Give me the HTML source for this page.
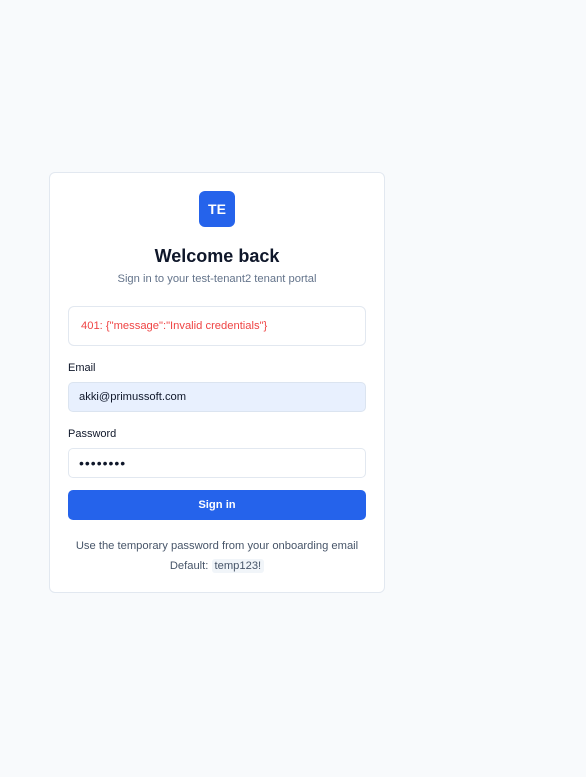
<!DOCTYPE html>
<html><head><meta charset="utf-8"><style>
*{box-sizing:border-box;margin:0;padding:0}
body{width:586px;height:777px;background:#f8fafc;font-family:"Liberation Sans",sans-serif;position:relative;overflow:hidden}
.card{position:absolute;left:49px;top:172px;width:336px;height:421px;background:#fff;border:1px solid #e2e8f0;border-radius:6px}
.logo{position:absolute;left:149px;top:18px;width:36px;height:36px;background:#2563eb;border-radius:6px;color:#fff;font-weight:bold;font-size:14px;text-align:center;line-height:36px}
h1{position:absolute;left:0;right:0;top:73px;text-align:center;font-size:18px;font-weight:bold;color:#0f172a}
.sub{position:absolute;left:0;right:0;top:100px;text-align:center;font-size:11.2px;color:#64748b}
.err{position:absolute;left:18px;top:133px;width:298px;height:40px;border:1px solid #e2e8f0;border-radius:6px;color:#ef4444;font-size:11.2px;line-height:38px;padding-left:12px}
.lbl{position:absolute;left:18px;font-size:11px;color:#0f172a}
.inp{position:absolute;left:18px;width:298px;height:30px;border:1px solid #e2e8f0;border-radius:5px;font-size:11.2px;line-height:28px;padding-left:10px;color:#0f172a}
.btn{position:absolute;left:18px;top:317px;width:298px;height:30px;background:#2563eb;border-radius:5px;color:#fff;font-weight:bold;font-size:11.2px;text-align:center;line-height:30px}
.note{position:absolute;left:0;right:0;text-align:center;font-size:11.2px;color:#475569}
code{font-family:"Liberation Sans",sans-serif;background:#f1f5f9;padding:1px 3px;border-radius:3px}
</style></head><body>
<div class="card">
<div class="logo">TE</div>
<h1>Welcome back</h1>
<div class="sub">Sign in to your test-tenant2 tenant portal</div>
<div class="err">401: {"message":"Invalid credentials"}</div>
<div class="lbl" style="top:189px">Email</div>
<div class="inp" style="top:209px;background:#e8f0fe;border-color:#dbe4f0">akki@primussoft.com</div>
<div class="lbl" style="top:255px">Password</div>
<div class="inp" style="top:275px;font-size:14px;letter-spacing:1px">••••••••</div>
<div class="btn">Sign in</div>
<div class="note" style="top:367px">Use the temporary password from your onboarding email</div>
<div class="note" style="top:387px">Default: <code>temp123!</code></div>
</div>
</body></html>
